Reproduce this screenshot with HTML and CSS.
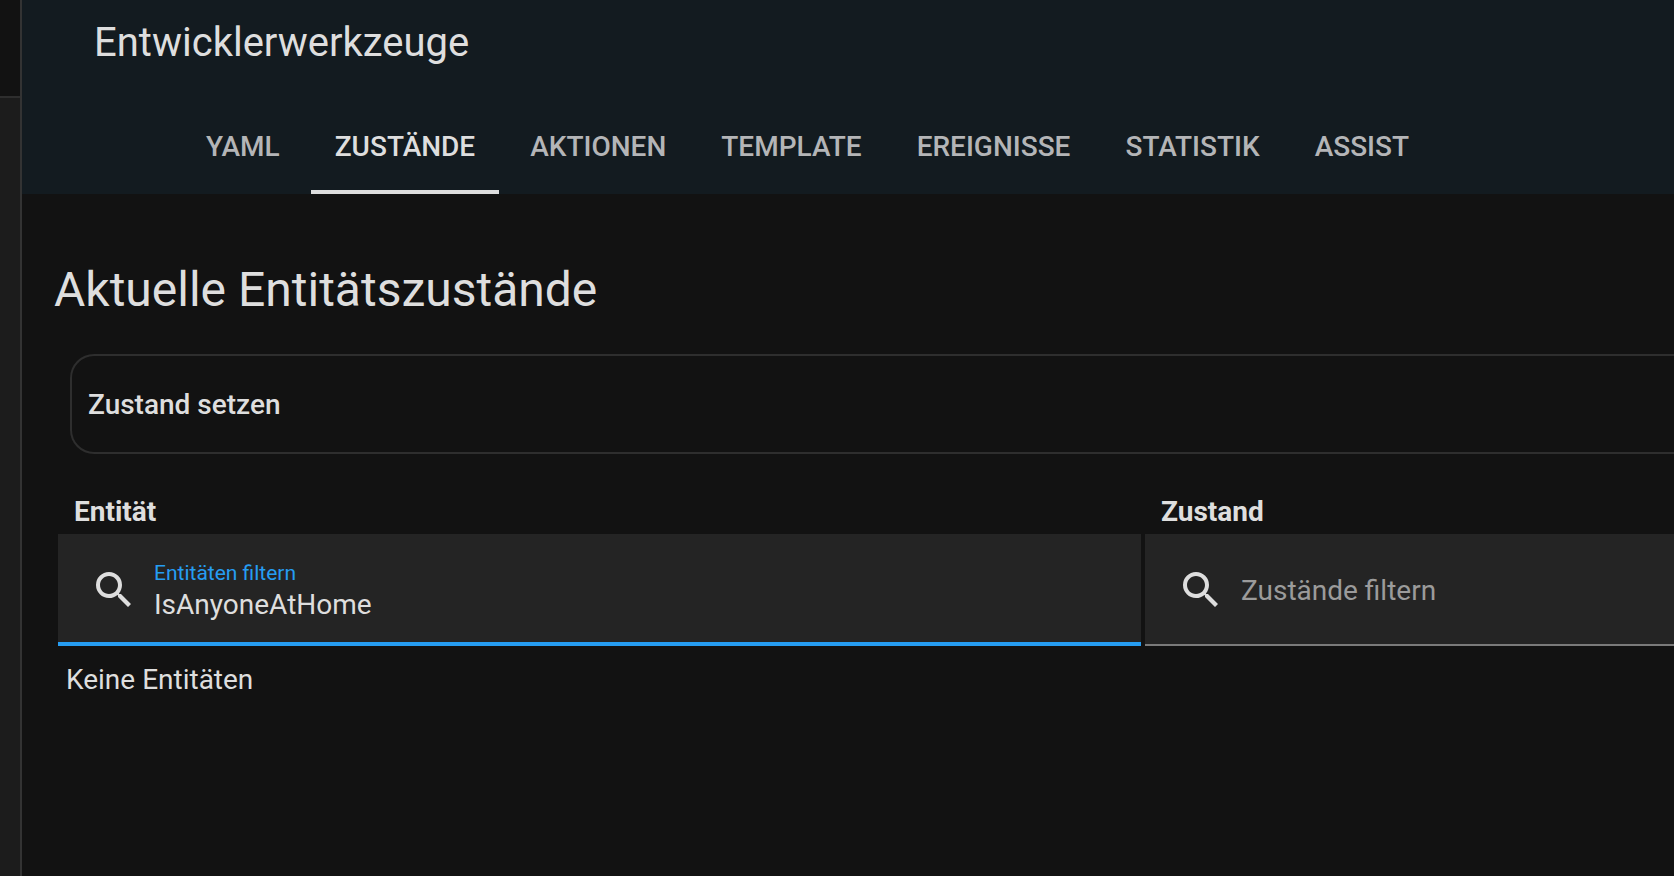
FILE: index.html
```html
<!DOCTYPE html>
<html lang="de">
<head>
    <meta charset="UTF-8">
    <meta name="viewport" content="width=device-width, initial-scale=1.0">
    <title>Entwicklerwerkzeuge</title>
    <link rel="stylesheet" href="styles.css">
</head>
<body>
    <div class="layout">
        <aside class="sidebar">
            <div class="sidebar-head"></div>
        </aside>

        <div class="main">
            <header class="header">
                <div class="title">Entwicklerwerkzeuge</div>
                <nav class="tabs">
                    <a href="#yaml">YAML</a>
                    <a href="#state" class="active">ZUSTÄNDE</a>
                    <a href="#action">AKTIONEN</a>
                    <a href="#template">TEMPLATE</a>
                    <a href="#event">EREIGNISSE</a>
                    <a href="#statistics">STATISTIK</a>
                    <a href="#assist">ASSIST</a>
                </nav>
            </header>

            <main class="content">
                <h1>Aktuelle Entitätszustände</h1>

                <button class="panel" type="button">Zustand setzen</button>

                <table class="entities">
                    <thead>
                        <tr>
                            <th class="col-entity">Entität</th>
                            <th>Zustand</th>
                        </tr>
                    </thead>
                    <tbody>
                        <tr>
                            <td class="filter-cell">
                                <div class="field focused">
                                    <svg class="icon" viewBox="0 0 24 24"><path d="M9.5,3A6.5,6.5 0 0,1 16,9.5C16,11.11 15.41,12.59 14.44,13.73L14.71,14H15.5L20.5,19L19,20.5L14,15.5V14.71L13.73,14.44C12.59,15.41 11.11,16 9.5,16A6.5,6.5 0 0,1 3,9.5A6.5,6.5 0 0,1 9.5,3M9.5,5C7,5 5,7 5,9.5C5,12 7,14 9.5,14C12,14 14,12 14,9.5C14,7 12,5 9.5,5Z"/></svg>
                                    <div class="field-text">
                                        <label for="entity-filter">Entitäten filtern</label>
                                        <input id="entity-filter" type="text" value="IsAnyoneAtHome" spellcheck="false">
                                    </div>
                                </div>
                            </td>
                            <td class="filter-cell">
                                <div class="field">
                                    <svg class="icon" viewBox="0 0 24 24"><path d="M9.5,3A6.5,6.5 0 0,1 16,9.5C16,11.11 15.41,12.59 14.44,13.73L14.71,14H15.5L20.5,19L19,20.5L14,15.5V14.71L13.73,14.44C12.59,15.41 11.11,16 9.5,16A6.5,6.5 0 0,1 3,9.5A6.5,6.5 0 0,1 9.5,3M9.5,5C7,5 5,7 5,9.5C5,12 7,14 9.5,14C12,14 14,12 14,9.5C14,7 12,5 9.5,5Z"/></svg>
                                    <div class="field-text">
                                        <input type="text" placeholder="Zustände filtern" aria-label="Zustände filtern">
                                    </div>
                                </div>
                            </td>
                        </tr>
                        <tr>
                            <td class="empty" colspan="2">Keine Entitäten</td>
                        </tr>
                    </tbody>
                </table>
            </main>
        </div>
    </div>
</body>
</html>
```

FILE: styles.css
```css
* {
    box-sizing: border-box;
}
body {
    font-family: Roboto, "Noto Sans", sans-serif;
    font-size: 28px;
    line-height: 40px;
    margin: 0;
    background-color: #121212;
    color: #dedede;
}
.layout {
    display: flex;
    min-height: 100vh;
}
.sidebar {
    flex: 0 0 22px;
    background-color: #1c1c1c;
    border-right: 2px solid #333333;
}
.sidebar-head {
    height: 98px;
    background-color: #121212;
    border-bottom: 2px solid #2e2e2e;
}
.main {
    flex: 1;
    min-width: 0;
}
.header {
    background-color: #131b20;
}
.title {
    height: 98px;
    padding-left: 72px;
    font-size: 40px;
    line-height: 86px;
}
.tabs {
    display: flex;
    gap: 7px;
    height: 96px;
    padding-left: 160px;
}
.tabs a {
    padding: 0 24px;
    border-bottom: 4px solid transparent;
    line-height: 98px;
    font-weight: 500;
    color: #b4b5b7;
    text-decoration: none;
}
.tabs a.active {
    color: #dedede;
    border-bottom-color: #dedede;
}
.content {
    padding: 64px 0 32px 32px;
}
h1 {
    margin: 0 0 32px;
    font-size: 48px;
    font-weight: 400;
    line-height: 64px;
}
.panel {
    display: block;
    width: calc(100% - 16px);
    height: 100px;
    margin-left: 16px;
    padding: 2px 16px 0;
    background: none;
    border: 2px solid #2e2e2e;
    border-right: none;
    border-radius: 24px 0 0 24px;
    color: inherit;
    font: inherit;
    font-weight: 500;
    text-align: left;
    cursor: pointer;
}
.entities {
    width: 100%;
    margin-top: 32px;
    border-collapse: collapse;
    table-layout: fixed;
}
.entities th {
    height: 48px;
    padding: 4px 20px 0;
    text-align: left;
    font-weight: 700;
}
.col-entity {
    width: 67.1%;
}
.filter-cell {
    padding: 0 0 0 4px;
}
.field {
    display: flex;
    align-items: center;
    height: 112px;
    padding-left: 32px;
    background-color: #242424;
    box-shadow: inset 0 -2px #7a7a7a;
}
.field.focused {
    box-shadow: inset 0 -4px #269df2;
}
.icon {
    flex: none;
    width: 48px;
    height: 48px;
    fill: #dedede;
}
.field-text {
    flex: 1;
    min-width: 0;
    padding: 2px 0 0 16px;
}
.field label {
    display: block;
    font-size: 21px;
    line-height: 28px;
    color: #269df2;
}
.field input {
    display: block;
    width: 100%;
    height: 36px;
    padding: 0;
    background: none;
    border: none;
    outline: none;
    color: #dedede;
    font: inherit;
}
.field input::placeholder {
    color: #9b9b9b;
    opacity: 1;
}
.empty {
    padding: 14px 12px;
}
```
